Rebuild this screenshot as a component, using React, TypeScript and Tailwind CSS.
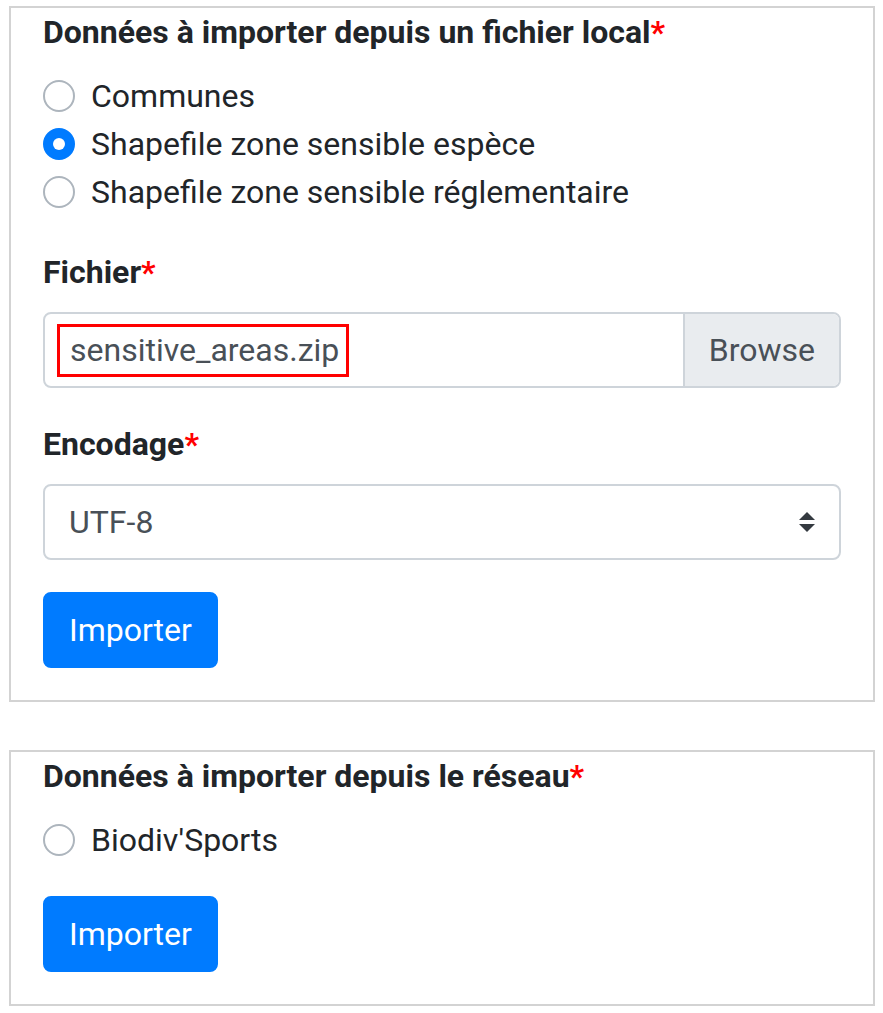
import React from "react";

function Required({ children }: { children: React.ReactNode }) {
  return (
    <div className="mb-[16px] font-bold">
      {children}
      <span className="text-[#ff0000]">*</span>
    </div>
  );
}

function Radio({ label, checked = false }: { label: string; checked?: boolean }) {
  return (
    <div className="flex items-start">
      {checked ? (
        <span className="mt-[8px] mr-[16px] flex h-[32px] w-[32px] shrink-0 items-center justify-center rounded-full border-2 border-[#007bff] bg-[#007bff]">
          <span className="h-[12px] w-[12px] rounded-full bg-white" />
        </span>
      ) : (
        <span className="mt-[8px] mr-[16px] h-[32px] w-[32px] shrink-0 rounded-full border-2 border-[#adb5bd] bg-white" />
      )}
      <span>{label}</span>
    </div>
  );
}

function ImportButton() {
  return (
    <button className="h-[76px] rounded-[8px] border-2 border-[#007bff] bg-[#007bff] px-[24px] text-white">
      Importer
    </button>
  );
}

export default function App() {
  return (
    <div className="min-h-screen bg-white pt-[6px] pl-[9px] font-['Roboto',sans-serif] text-[32px] leading-[48px] text-[#212529]">
      <div className="w-[866px] border-2 border-[#d3d3d3] px-[32px] pb-[32px]">
        <Required>Données à importer depuis un fichier local</Required>
        <div className="mb-[32px]">
          <Radio label="Communes" />
          <Radio label="Shapefile zone sensible espèce" checked />
          <Radio label="Shapefile zone sensible réglementaire" />
        </div>

        <Required>Fichier</Required>
        <div className="mb-[32px] flex h-[76px] overflow-hidden rounded-[8px] border-2 border-[#ced4da]">
          <div className="flex flex-1 items-center pl-[12px]">
            <span className="border-[3px] border-[#ff0000] pl-[10px] pr-[7px] leading-[47px] text-[#495057]">
              sensitive_areas.zip
            </span>
          </div>
          <div className="flex items-center border-l-2 border-[#ced4da] bg-[#e9ecef] px-[24px] text-[#495057]">
            Browse
          </div>
        </div>

        <Required>Encodage</Required>
        <div className="mb-[32px] flex h-[76px] items-center justify-between rounded-[8px] border-2 border-[#ced4da] px-[24px] text-[#495057]">
          <span>UTF-8</span>
          <svg width="16" height="20" viewBox="0 0 4 5">
            <path d="M2 0L0 2h4zm0 5L0 3h4z" fill="#343a40" />
          </svg>
        </div>

        <ImportButton />
      </div>

      <div className="mt-[48px] w-[866px] border-2 border-[#d3d3d3] px-[32px] pb-[32px]">
        <Required>Données à importer depuis le réseau</Required>
        <div className="mb-[32px]">
          <Radio label="Biodiv'Sports" />
        </div>
        <ImportButton />
      </div>
    </div>
  );
}
